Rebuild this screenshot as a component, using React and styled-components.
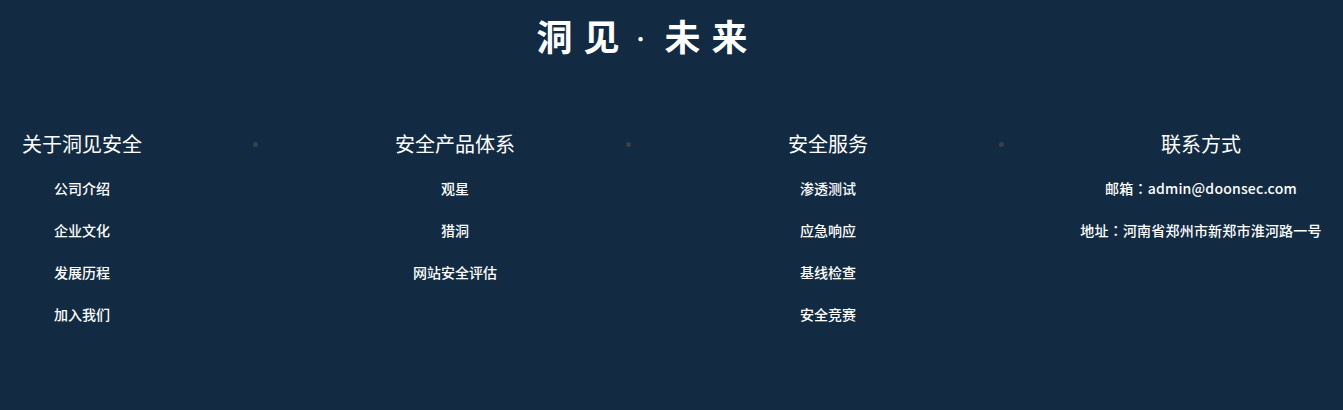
import React from 'react'
import styled, {createGlobalStyle} from 'styled-components'

const GlobalStyle = createGlobalStyle`
  html, body {
    margin: 0;
    padding: 0;
    background: #132b42;
  }
  body {
    font-family: "Noto Sans CJK SC", "Noto Sans", sans-serif;
    color: #fff;
  }
`

const Footer = styled.footer`
  background: #132b42;
  height: 410px;
  overflow: hidden;
`

const Title = styled.h1`
  margin: 0;
  padding: 10px 48px 0 0;
  text-align: center;
  font-size: 36px;
  line-height: 50px;
  font-weight: 700;
  letter-spacing: 11px;
  color: #fff;
`

const TitleDot = styled.span`
  font-weight: 400;
  font-size: 20px;
  letter-spacing: 14px;
  vertical-align: 4px;
`

const Columns = styled.div`
  display: flex;
  align-items: flex-start;
  margin-top: 65px;
`

const Column = styled.div`
  width: 164px;
  flex: none;
  display: flex;
  flex-direction: column;
  align-items: center;
`

const Separator = styled.div`
  width: 209px;
  flex: none;
  height: 30px;
  display: flex;
  align-items: center;
  padding-left: 89px;
  box-sizing: border-box;

  &::before {
    content: '';
    width: 5px;
    height: 5px;
    border-radius: 50%;
    background: #3a4048;
  }
`

const Heading = styled.h3`
  margin: 0;
  font-size: 20px;
  line-height: 30px;
  font-weight: 400;
  white-space: nowrap;
`

const List = styled.ul`
  list-style: none;
  margin: 19px 0 0;
  padding: 0;
  display: flex;
  flex-direction: column;
  align-items: center;
  gap: 22px;
`

const Item = styled.li`
  font-size: 14px;
  line-height: 20px;
  font-weight: 500;
  white-space: nowrap;
  letter-spacing: ${p => (p.$wide ? '0.2px' : '0')};
`

const Colon = styled.span`
  font-family: "Noto Sans CJK TC", "Noto Sans CJK SC", sans-serif;
`

const columns = [
  {title: '关于洞见安全', items: ['公司介绍', '企业文化', '发展历程', '加入我们']},
  {title: '安全产品体系', items: ['观星', '猎洞', '网站安全评估']},
  {title: '安全服务', items: ['渗透测试', '应急响应', '基线检查', '安全竞赛']},
  {title: '联系方式', items: [['邮箱', 'admin@doonsec.com'], ['地址', '河南省郑州市新郑市淮河路一号']]},
]

export default function App() {
  return (
    <>
      <GlobalStyle />
      <Footer>
        <Title>
          洞见<TitleDot>·</TitleDot>未来
        </Title>
        <Columns>
          {columns.map((col, i) => (
            <React.Fragment key={col.title}>
              {i > 0 && <Separator />}
              <Column>
                <Heading>{col.title}</Heading>
                <List>
                  {col.items.map(item =>
                    Array.isArray(item) ? (
                      <Item key={item[0]} $wide>
                        {item[0]}<Colon>：</Colon>{item[1]}
                      </Item>
                    ) : (
                      <Item key={item}>{item}</Item>
                    )
                  )}
                </List>
              </Column>
            </React.Fragment>
          ))}
        </Columns>
      </Footer>
    </>
  )
}
